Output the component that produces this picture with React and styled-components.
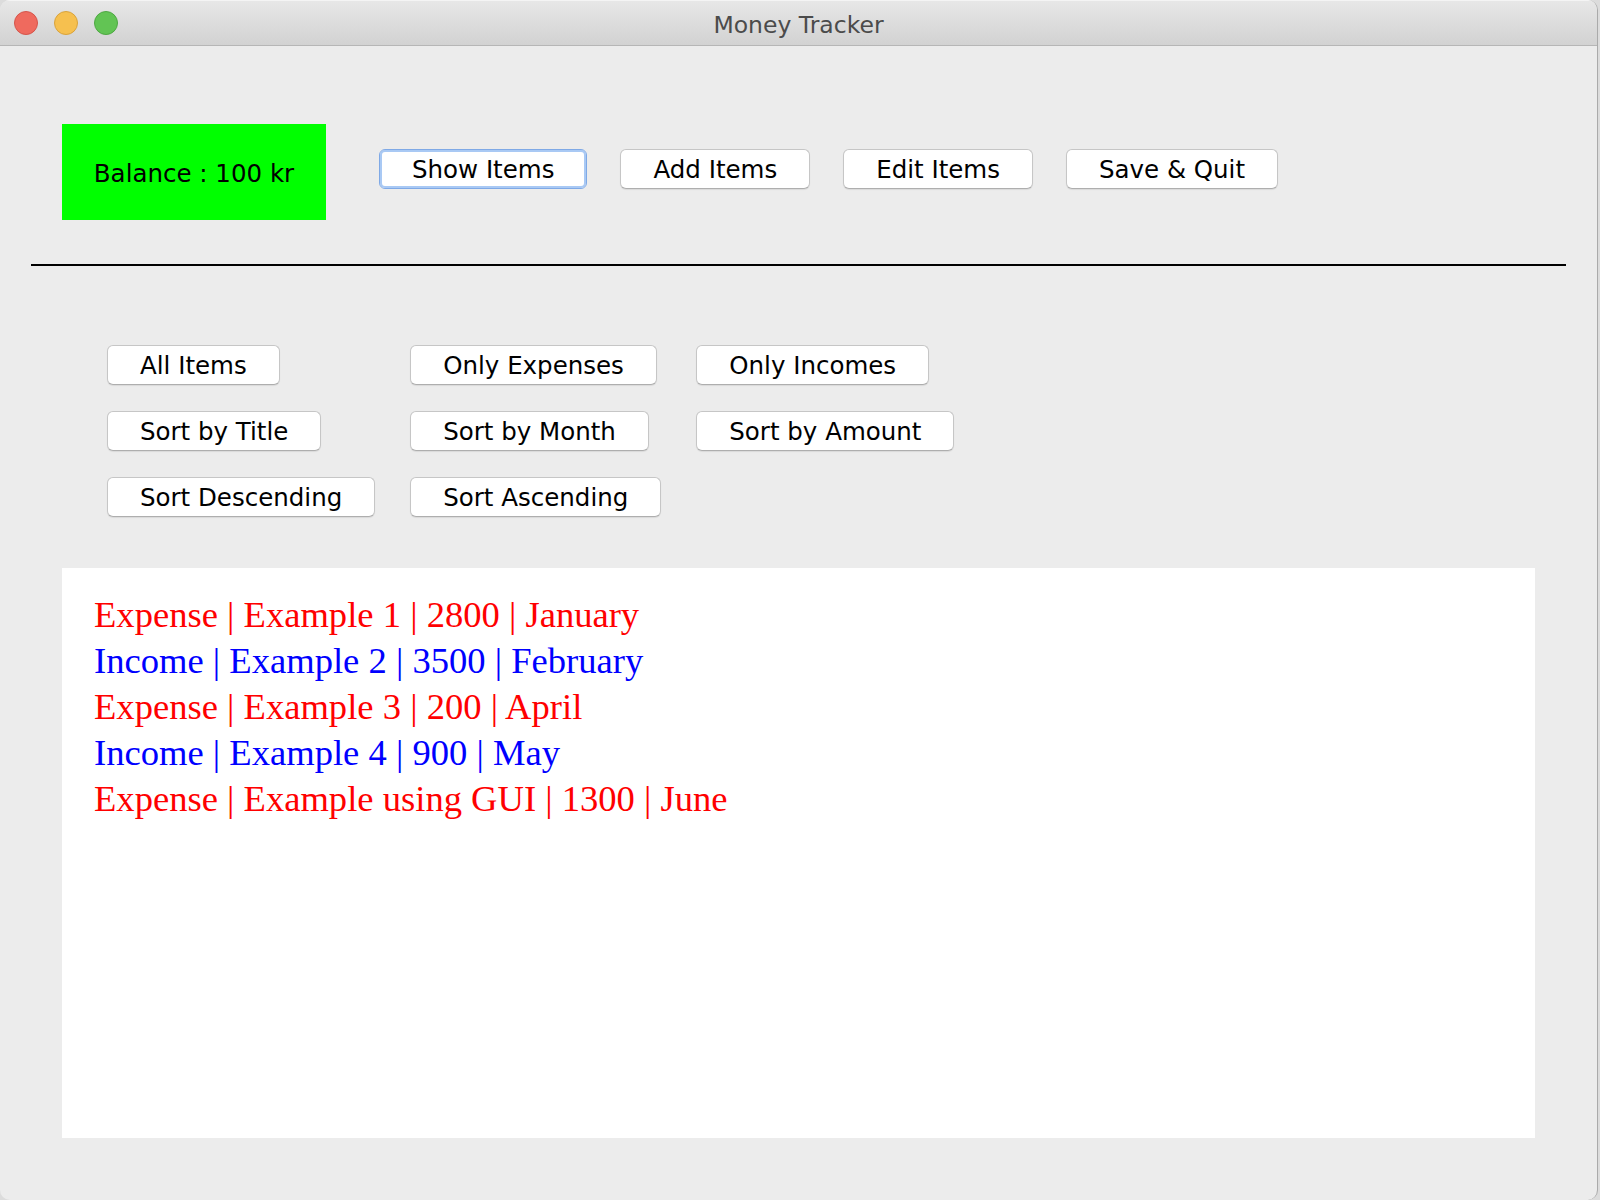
import React from "react";
import styled, { createGlobalStyle } from "styled-components";

const GlobalStyle = createGlobalStyle`
  html, body {
    margin: 0;
    padding: 0;
    background: #dcdcdc;
  }
  * { box-sizing: border-box; }
`;

const Window = styled.div`
  width: 1598px;
  height: 1200px;
  background: #ececec;
  border-right: 1px solid #aaaaaa;
  border-radius: 10px;
  overflow: hidden;
  display: flex;
  flex-direction: column;
  font-family: "DejaVu Sans", "Liberation Sans", sans-serif;
`;

const TitleBar = styled.div`
  height: 46px;
  flex: none;
  display: grid;
  grid-template-columns: 1fr auto 1fr;
  align-items: center;
  padding: 0 14px;
  background: linear-gradient(#e7e7e7, #d2d2d2);
  border-bottom: 1px solid #b6b6b6;
  border-top: 1px solid #f4f4f4;
`;

const Lights = styled.div`
  display: flex;
  gap: 16px;
  align-items: center;
`;

const Light = styled.span`
  width: 24px;
  height: 24px;
  border-radius: 50%;
  background: ${(p) => p.$fill};
  border: 1px solid ${(p) => p.$edge};
`;

const Title = styled.div`
  font-size: 23.5px;
  color: #4b4b4b;
  padding-top: 3px;
`;

const Content = styled.div`
  flex: 1;
  display: flex;
  flex-direction: column;
  padding: 0 31px;
`;

const TopRow = styled.div`
  display: flex;
  align-items: flex-start;
  margin-top: 78px;
  padding-left: 31px;
`;

const BalanceBox = styled.div`
  width: 264px;
  height: 96px;
  background: #00ff00;
  display: flex;
  align-items: center;
  justify-content: center;
  padding-top: 3px;
  font-size: 24.5px;
  color: #000;
`;

const TopButtons = styled.div`
  display: flex;
  gap: 33px;
  margin-left: 53px;
  margin-top: 25px;
`;

const Button = styled.button`
  height: 40px;
  padding: 2px 32px 0;
  font-family: "DejaVu Sans", "Liberation Sans", sans-serif;
  font-size: 24.5px;
  color: #000;
  background: #ffffff;
  border: 1px solid ${(p) => (p.$focused ? "#7fa9e6" : "#c6c6c6")};
  border-bottom-color: ${(p) => (p.$focused ? "#7fa9e6" : "#aeaeae")};
  border-radius: 6px;
  box-shadow: ${(p) =>
    p.$focused
      ? "inset 0 0 0 2px #a9c9f4"
      : "0 1px 1px rgba(0, 0, 0, 0.08)"};
  white-space: nowrap;
  cursor: default;
  line-height: 1;
`;

const Divider = styled.div`
  height: 2px;
  background: #000;
  margin-top: 44px;
`;

const FilterGrid = styled.div`
  display: grid;
  grid-template-columns: repeat(3, auto);
  justify-content: start;
  justify-items: start;
  column-gap: 35px;
  row-gap: 26px;
  margin-top: 79px;
  margin-left: 76px;
`;

const ItemList = styled.div`
  margin: 51px 31px 0;
  height: 570px;
  background: #ffffff;
  padding: 24px 32px;
  font-family: "Liberation Serif", "Times New Roman", serif;
  font-size: 36.6px;
  line-height: 46px;
`;

const ItemLine = styled.div`
  color: ${(p) => (p.$kind === "Income" ? "#0000ff" : "#ff0000")};
  white-space: nowrap;
`;

const topButtons = ["Show Items", "Add Items", "Edit Items", "Save & Quit"];

const filterButtons = [
  "All Items",
  "Only Expenses",
  "Only Incomes",
  "Sort by Title",
  "Sort by Month",
  "Sort by Amount",
  "Sort Descending",
  "Sort Ascending",
];

const items = [
  { kind: "Expense", title: "Example 1", amount: 2800, month: "January" },
  { kind: "Income", title: "Example 2", amount: 3500, month: "February" },
  { kind: "Expense", title: "Example 3", amount: 200, month: "April" },
  { kind: "Income", title: "Example 4", amount: 900, month: "May" },
  { kind: "Expense", title: "Example using GUI", amount: 1300, month: "June" },
];

export default function App() {
  return (
    <>
      <GlobalStyle />
      <Window>
        <TitleBar>
          <Lights>
            <Light $fill="#ef6a5e" $edge="#d5554b" />
            <Light $fill="#f6c04f" $edge="#d9a33c" />
            <Light $fill="#62c454" $edge="#4ea843" />
          </Lights>
          <Title>Money Tracker</Title>
          <div />
        </TitleBar>
        <Content>
          <TopRow>
            <BalanceBox>Balance : 100 kr</BalanceBox>
            <TopButtons>
              {topButtons.map((label, i) => (
                <Button key={label} $focused={i === 0}>
                  {label}
                </Button>
              ))}
            </TopButtons>
          </TopRow>
          <Divider />
          <FilterGrid>
            {filterButtons.map((label) => (
              <Button key={label}>{label}</Button>
            ))}
          </FilterGrid>
          <ItemList>
            {items.map((it) => (
              <ItemLine key={it.title} $kind={it.kind}>
                {it.kind} | {it.title} | {it.amount} | {it.month}
              </ItemLine>
            ))}
          </ItemList>
        </Content>
      </Window>
    </>
  );
}
